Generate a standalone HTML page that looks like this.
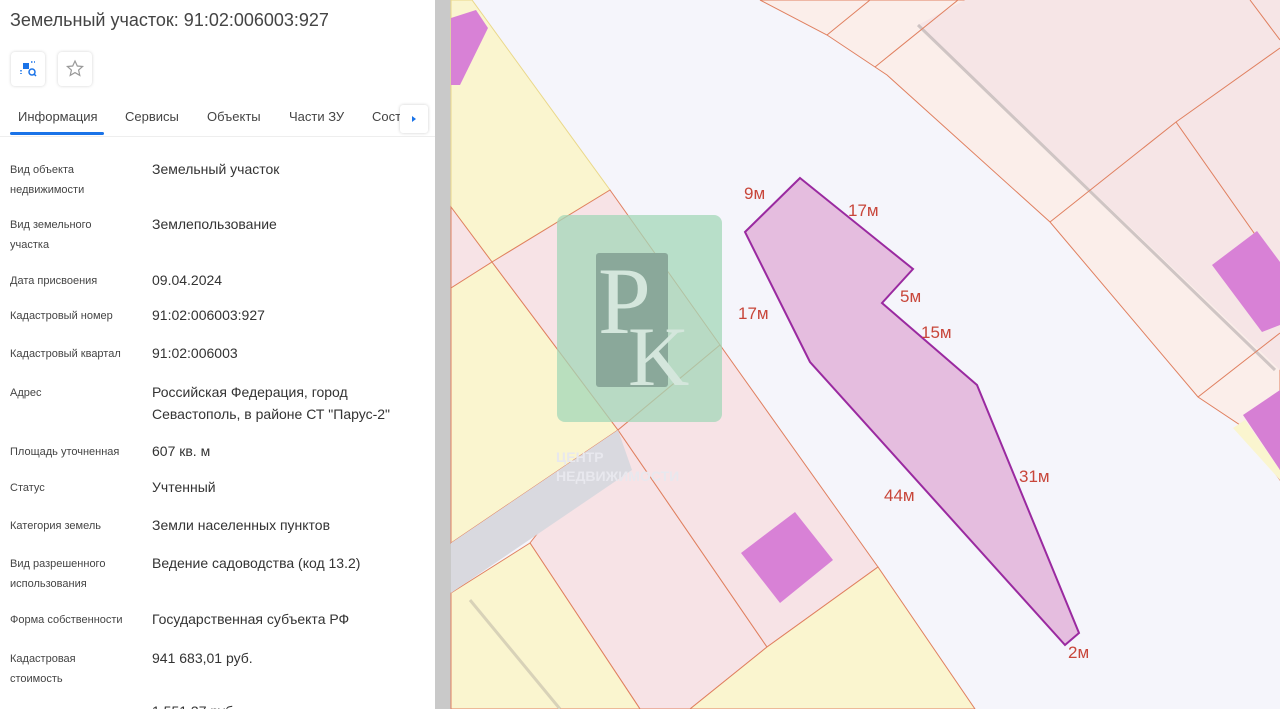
<!DOCTYPE html>
<html><head><meta charset="utf-8"><style>
html,body{margin:0;width:1280px;height:709px;overflow:hidden}
body{position:relative;background:#fff;font-family:"Liberation Sans","DejaVu Sans",sans-serif;color:#333}
.p{position:absolute;left:0;top:0;width:435px;height:709px;background:#fff;overflow:hidden}
.sb{position:absolute;left:435px;top:0;width:16px;height:709px;background:#c9c9c9}
.t{position:absolute;left:10px;top:10px;font-size:18px;color:#444}
.btn{position:absolute;top:52px;width:34px;height:34px;border-radius:4px;box-shadow:0 0 3px rgba(0,0,0,.18);background:#fff}
.tab{position:absolute;top:109px;font-size:13px;color:#444}
.l{position:absolute;left:10px;font-size:11px;color:#444;line-height:20px;width:135px}
.v{position:absolute;left:152px;font-size:14px;color:#333;line-height:22px}
</style></head><body>
<div class="p">
<div class="t">Земельный участок: 91:02:006003:927</div>
<div class="btn" style="left:11px"><svg width="34" height="34"><rect x="12" y="11" width="6" height="6" fill="#1a73e8"/><path d="M20 10h4M10 18v4" stroke="#1a73e8" stroke-width="1.5" stroke-dasharray="1.5 1.5"/><circle cx="21" cy="20" r="3" fill="none" stroke="#1a73e8" stroke-width="1.5"/><path d="M23 22l2 2" stroke="#1a73e8" stroke-width="1.5"/></svg></div>
<div class="btn" style="left:58px"><svg width="34" height="34"><path d="M17 9l2.3 5 5.3.5-4 3.6 1.2 5.3-4.8-2.8-4.8 2.8 1.2-5.3-4-3.6 5.3-.5z" fill="none" stroke="#999" stroke-width="1.2"/></svg></div>
<div class="tab" style="left:18px">Информация</div>
<div class="tab" style="left:125px">Сервисы</div>
<div class="tab" style="left:207px">Объекты</div>
<div class="tab" style="left:289px">Части ЗУ</div>
<div class="tab" style="left:372px">Сост</div>
<div style="position:absolute;left:400px;top:105px;width:28px;height:28px;background:#fff;box-shadow:0 0 3px rgba(0,0,0,.2);border-radius:3px"><div style="position:absolute;left:12px;top:11px;border-left:4px solid #1a73e8;border-top:3px solid transparent;border-bottom:3px solid transparent"></div></div>
<div style="position:absolute;left:10px;top:132px;width:94px;height:3px;background:#1a73e8;border-radius:2px"></div>
<div style="position:absolute;left:0;top:136px;width:435px;height:1px;background:#eee"></div>
<div class="l" style="top:160px">Вид объекта<br>недвижимости</div><div class="v" style="top:158px">Земельный участок</div>
<div class="l" style="top:215px">Вид земельного<br>участка</div><div class="v" style="top:213px">Землепользование</div>
<div class="l" style="top:271px">Дата присвоения</div><div class="v" style="top:269px">09.04.2024</div>
<div class="l" style="top:306px">Кадастровый номер</div><div class="v" style="top:304px">91:02:006003:927</div>
<div class="l" style="top:344px">Кадастровый квартал</div><div class="v" style="top:342px">91:02:006003</div>
<div class="l" style="top:383px">Адрес</div><div class="v" style="top:381px">Российская Федерация, город<br>Севастополь, в районе СТ "Парус-2"</div>
<div class="l" style="top:442px">Площадь уточненная</div><div class="v" style="top:440px">607 кв. м</div>
<div class="l" style="top:478px">Статус</div><div class="v" style="top:476px">Учтенный</div>
<div class="l" style="top:516px">Категория земель</div><div class="v" style="top:514px">Земли населенных пунктов</div>
<div class="l" style="top:554px">Вид разрешенного<br>использования</div><div class="v" style="top:552px">Ведение садоводства (код 13.2)</div>
<div class="l" style="top:610px">Форма собственности</div><div class="v" style="top:608px">Государственная субъекта РФ</div>
<div class="l" style="top:649px">Кадастровая<br>стоимость</div><div class="v" style="top:647px">941 683,01 руб.</div>
<div class="v" style="top:700px">1 551,37 руб.</div>
</div>
<div class="sb"></div>
<svg style="position:absolute;left:0;top:0" width="1280" height="709">
<rect x="451" y="0" width="829" height="709" fill="#f5f5fb"/>
<g stroke="#e08060" stroke-width="1">
<polygon points="451,0 472,0 610,190 492,262 451,207" fill="#faf5cf" stroke="#ead88a"/>
<polygon points="451,207 492,262 451,288" fill="#f7e3e6"/>
<polygon points="451,288 492,262 618,430 451,543" fill="#faf5cf"/>
<polygon points="492,262 610,190 720,345 618,430" fill="#f7e3e6"/>
<polygon points="530,543 618,430 767,647 690,709 640,709" fill="#f7e3e6"/>
<polygon points="618,430 720,345 878,567 767,647" fill="#f7e3e6"/>
<polygon points="451,593 530,543 640,709 451,709" fill="#faf5cf"/>
<polygon points="690,709 767,647 878,567 975,709" fill="#faf5cf"/>
</g>
<polygon points="451,543 618,430 632,470 451,593" fill="#d9d9df"/>
<path d="M470,600 L560,709" stroke="#d8d2b8" stroke-width="3"/>
<polygon points="760,0 1280,0 1280,480 1240,425 1198,397 1050,222 887,75 875,67 827,35" fill="#fbeeea" stroke="#e08060" stroke-width="1"/>
<polygon points="918,25 965,0 1280,0 1280,370" fill="#f6e5e6"/>
<path d="M918,25 L1275,370" stroke="#bdb4b4" stroke-width="3" opacity=".7"/>
<path d="M827,35 L870,0 M875,67 L958,0 M1050,222 L1176,122 L1280,48 M1176,122 L1280,270 M1198,397 L1280,333 M1250,0 L1280,40" stroke="#e08060" stroke-width="1" fill="none"/>
<polygon points="1233,428 1245,420 1280,470 1280,480" fill="#faf5cf"/>
<polygon points="1243,415 1280,390 1280,470" fill="#d67fd4"/>
<polygon points="741,553 795,512 833,560 780,603" fill="#d881d6"/>
<polygon points="1212,265 1257,231 1280,262 1280,325 1262,332" fill="#d881d6"/>
<polygon points="451,18 476,10 488,28 460,85 451,85" fill="#d881d6"/>
<rect x="557" y="215" width="165" height="207" rx="8" fill="#a3d7b8" opacity=".75"/>
<rect x="596" y="253" width="72" height="134" rx="3" fill="#8aa89a"/>
<text x="598" y="333" font-family="Liberation Serif" font-size="95" fill="#d4e6dc">P</text>
<text x="628" y="385" font-family="Liberation Serif" font-size="85" fill="#d4e6dc">K</text>
<text x="556" y="462" font-size="14" fill="#e8e8ee" font-weight="bold">ЦЕНТР</text>
<text x="556" y="481" font-size="14" fill="#e8e8ee" font-weight="bold">НЕДВИЖИМОСТИ</text>
<polygon points="800,178 913,269 882,303 977,385 1079,633 1065,645 810,362 745,232" fill="#e5bddf" stroke="#9a2aa0" stroke-width="2"/>
<g font-size="17" fill="#c8463a">
<text x="744" y="199">9м</text><text x="848" y="216">17м</text><text x="900" y="302">5м</text><text x="921" y="338">15м</text><text x="738" y="319">17м</text><text x="1019" y="482">31м</text><text x="884" y="501">44м</text><text x="1068" y="658">2м</text>
</g>
</svg>
</body></html>
